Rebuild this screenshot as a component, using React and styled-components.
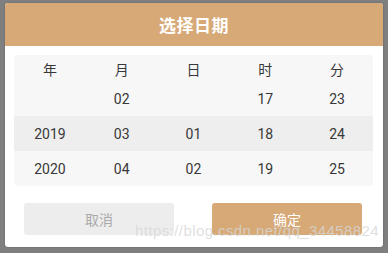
import React from "react";
import styled, { createGlobalStyle } from "styled-components";

const GlobalStyle = createGlobalStyle`
  html, body {
    margin: 0;
    padding: 0;
    background: #7f7f7f;
  }
  body {
    font-family: Roboto, "Noto Sans CJK SC", sans-serif;
  }
`;

const Page = styled.div`
  width: 388px;
  height: 253px;
  padding: 3px 5px 6px 5px;
  box-sizing: border-box;
  position: relative;
`;

const Dialog = styled.div`
  width: 378px;
  height: 244px;
  background: #fff;
  border-radius: 3px;
  overflow: hidden;
  display: flex;
  flex-direction: column;
  box-shadow: 0 0 2px rgba(0, 0, 0, 0.25);
`;

const Header = styled.div`
  height: 43px;
  flex-shrink: 0;
  background: #d6a977;
  color: #fff;
  display: flex;
  align-items: center;
  justify-content: center;
  font-size: 17px;
  font-weight: 700;
  letter-spacing: 0.5px;
`;

const Body = styled.div`
  padding: 9px 10px 0 9px;
`;

const Picker = styled.div`
  background: #f7f7f7;
  border-radius: 4px;
  overflow: hidden;
`;

const Row = styled.div`
  display: grid;
  grid-template-columns: repeat(5, 1fr);
  height: ${({ $label }) => ($label ? "25px" : "35px")};
  background: ${({ $active }) => ($active ? "#eeeeee" : "transparent")};
  align-items: center;
  padding-top: ${({ $label }) => ($label ? "1px" : "0")};
`;

const Cell = styled.div`
  text-align: center;
  font-size: 14px;
  color: #383838;
`;

const Actions = styled.div`
  display: flex;
  justify-content: space-between;
  padding: 17px 21px 0 19px;
`;

const Button = styled.div`
  width: 150px;
  height: 32px;
  border-radius: 3px;
  display: flex;
  align-items: center;
  justify-content: center;
  font-size: 14px;
  font-family: "Noto Sans CJK SC", sans-serif;
  background: ${({ $primary }) => ($primary ? "#d6a977" : "#ededed")};
  color: ${({ $primary }) => ($primary ? "#fff" : "#aaa")};
`;

const Watermark = styled.div`
  position: absolute;
  left: 135px;
  top: 222px;
  font-family: "Liberation Sans", Arial, sans-serif;
  font-size: 15px;
  letter-spacing: 0.42px;
  color: rgba(215, 215, 215, 0.8);
  white-space: nowrap;
  pointer-events: none;
`;

const labels = ["年", "月", "日", "时", "分"];
const rows = [
  { cells: ["", "02", "", "17", "23"] },
  { cells: ["2019", "03", "01", "18", "24"], active: true },
  { cells: ["2020", "04", "02", "19", "25"] },
];

export default function App() {
  return (
    <Page>
      <GlobalStyle />
      <Dialog>
        <Header>选择日期</Header>
        <Body>
          <Picker>
            <Row $label>
              {labels.map((l) => (
                <Cell key={l}>{l}</Cell>
              ))}
            </Row>
            {rows.map((r, i) => (
              <Row key={i} $active={r.active}>
                {r.cells.map((c, j) => (
                  <Cell key={j}>{c}</Cell>
                ))}
              </Row>
            ))}
          </Picker>
        </Body>
        <Actions>
          <Button>取消</Button>
          <Button $primary>确定</Button>
        </Actions>
      </Dialog>
      <Watermark>https://blog.csdn.net/qq_34458824</Watermark>
    </Page>
  );
}
